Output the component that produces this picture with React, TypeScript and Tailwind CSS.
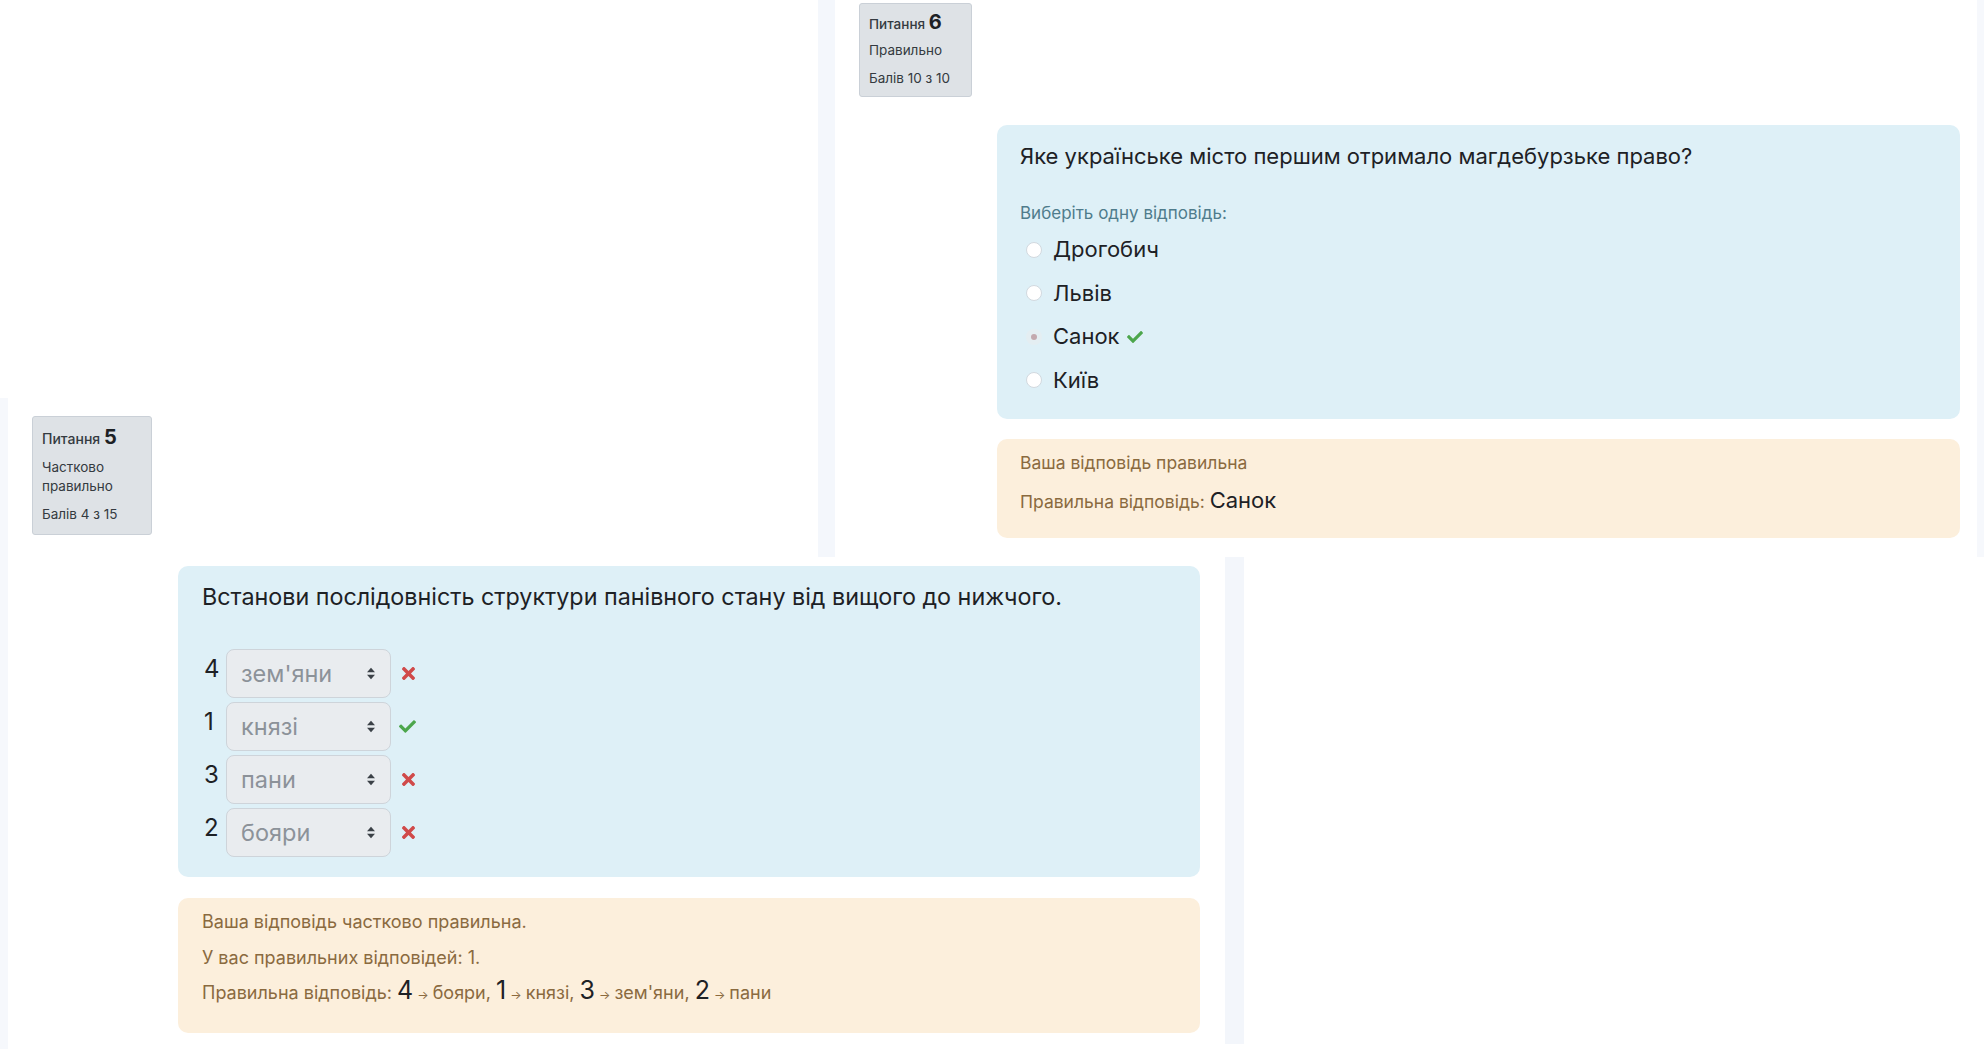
import { FaCheck, FaTimes } from "react-icons/fa";

type InfoProps = {
  no: number;
  state: string;
  grade: string;
  width: string;
  loose?: boolean;
};

function InfoBox({ no, state, grade, width, loose }: InfoProps) {
  return (
    <div
      className={`${width} rounded-[3px] border border-[#cad0d7] bg-[#dee2e6] pl-[9px] pr-[6px] ${
        loose ? "pt-[8px] pb-[10px]" : "pt-[6px] pb-[8px]"
      } text-[#343a40]`}
    >
      <h3 className={`${loose ? "text-[14px]" : "text-[13.5px]"} leading-[24px] font-medium`}>
        Питання <span className="text-[20px] font-bold text-[#1d2125]">{no}</span>
      </h3>
      <div className={`${loose ? "mt-[7px]" : "mt-[5px]"} text-[13.5px] leading-[19px]`}>{state}</div>
      <div className="mt-[9px] text-[13.5px] leading-[19px]">{grade}</div>
    </div>
  );
}

function SortArrows() {
  return (
    <svg width="8" height="13" viewBox="0 0 8 13" className="text-[#3b4147]">
      <path d="M0 5.2 L4 0.8 L8 5.2 Z" fill="currentColor" />
      <path d="M0 7.8 L4 12.2 L8 7.8 Z" fill="currentColor" />
    </svg>
  );
}

function Radio({ checked }: { checked?: boolean }) {
  if (checked) {
    return (
      <span className="flex h-[16px] w-[16px] items-center justify-center rounded-full bg-[#e4eef2]">
        <span className="h-[6px] w-[6px] rounded-full bg-[#c3a9ae]" />
      </span>
    );
  }
  return <span className="h-[16px] w-[16px] rounded-full border border-[#d2d9df] bg-white" />;
}

const options = [
  { label: "Дрогобич" },
  { label: "Львів" },
  { label: "Санок", checked: true },
  { label: "Київ" },
];

const orderRows = [
  { n: "4", value: "зем'яни", ok: false },
  { n: "1", value: "князі", ok: true },
  { n: "3", value: "пани", ok: false },
  { n: "2", value: "бояри", ok: false },
];

const rightAnswer = [
  { n: "4", v: "бояри" },
  { n: "1", v: "князі" },
  { n: "3", v: "зем'яни" },
  { n: "2", v: "пани" },
];

export default function App() {
  return (
    <div className="grid h-[1049px] w-[1984px] overflow-hidden bg-white font-['Inter','DejaVu_Sans',sans-serif] text-[#1d2125]">
      {/* Питання 5 — ordering question */}
      <section className="[grid-area:1/1] ml-[-9px] mt-[398px] flex h-[651px] w-[1253px] self-start justify-self-start bg-white">
        <div className="w-[17px] bg-[#f6f8fc]" />
        <div className="ml-[24px] mt-[18px] self-start">
          <InfoBox no={5} state="Частково правильно" grade="Балів 4 з 15" width="w-[120px]" loose />
        </div>
        <div className="ml-[26px] w-[1022px] pt-[168px]">
          <div className="rounded-[10px] bg-[#def0f7] px-[24px] pt-[16px] pb-[20px]">
            <p className="text-[23.3px] leading-[30px]">
              Встанови послідовність структури панівного стану від вищого до нижчого.
            </p>
            <div className="mt-[37px] flex flex-col gap-[4px]">
              {orderRows.map((r) => (
                <div key={r.n} className="flex items-start">
                  <span className="ml-[2px] w-[17px] text-[24px] leading-[40px]">{r.n}</span>
                  <div className="ml-[5px] flex h-[49px] w-[165px] items-center justify-between rounded-[8px] border border-[#ced4da] bg-[#e9ecef] pl-[14px] pr-[15px]">
                    <span className="text-[23.5px] text-[#8c9299]">{r.value}</span>
                    <SortArrows />
                  </div>
                  <span className="ml-[8px] self-center">
                    {r.ok ? (
                      <FaCheck size={17} className="text-[#4ca64c]" />
                    ) : (
                      <FaTimes size={19} className="text-[#d04a4a]" />
                    )}
                  </span>
                </div>
              ))}
            </div>
          </div>
          <div className="mt-[21px] rounded-[10px] bg-[#fcefdc] px-[24px] pt-[12px] pb-[24px] text-[18px] text-[#8a6a3f]">
            <div className="leading-[24px]">Ваша відповідь частково правильна.</div>
            <div className="mt-[12px] leading-[24px]">У вас правильних відповідей: 1.</div>
            <div className="mt-[6px] flex items-baseline leading-[28px]">
              <span>Правильна відповідь:&nbsp;</span>
              {rightAnswer.map((a, i) => (
                <span key={a.n} className="flex items-baseline">
                  <span className="text-[25px] text-[#1d2125]">{a.n}</span>
                  <span className="mx-[4px] text-[12px]">→</span>
                  <span>
                    {a.v}
                    {i < rightAnswer.length - 1 ? ",\u00a0" : ""}
                  </span>
                </span>
              ))}
            </div>
          </div>
        </div>
        <div className="ml-[25px] mt-[159px] mb-[5px] w-[19px] bg-[#f3f6fb]" />
      </section>

      {/* Питання 6 — single choice question */}
      <section className="[grid-area:1/1] ml-[818px] flex h-[557px] w-[1166px] self-start justify-self-start bg-white">
        <div className="w-[17px] bg-[#f4f7fc]" />
        <div className="ml-[24px] mt-[3px] self-start">
          <InfoBox no={6} state="Правильно" grade="Балів 10 з 10" width="w-[113px]" />
        </div>
        <div className="ml-[25px] w-[963px] pt-[125px]">
          <div className="rounded-[10px] bg-[#def0f7] px-[23px] pt-[16px] pb-[17px]">
            <p className="text-[22px] leading-[30px]">Яке українське місто першим отримало магдебурзьке право?</p>
            <p className="mt-[30px] text-[17px] leading-[24px] text-[#4f7c8c]">Виберіть одну відповідь:</p>
            <div className="mt-[3px]">
              {options.map((o) => (
                <div key={o.label} className="flex h-[43.5px] items-center">
                  <span className="ml-[6px] flex">
                    <Radio checked={o.checked} />
                  </span>
                  <span className="ml-[11px] text-[22px]">{o.label}</span>
                  {o.checked && <FaCheck size={16} className="ml-[7px] text-[#4ca64c]" />}
                </div>
              ))}
            </div>
          </div>
          <div className="mt-[20px] rounded-[10px] bg-[#fcefdc] px-[23px] pt-[12px] pb-[21px] text-[17.5px] text-[#8a6a3f]">
            <div className="leading-[24px]">Ваша відповідь правильна</div>
            <div className="mt-[10px] flex items-baseline leading-[30px]">
              <span>Правильна відповідь:&nbsp;</span>
              <span className="text-[22px] text-[#1d2125]">Санок</span>
            </div>
          </div>
        </div>
        <div className="ml-[17px] flex-1 bg-[#f6f8fc]" />
      </section>
    </div>
  );
}
